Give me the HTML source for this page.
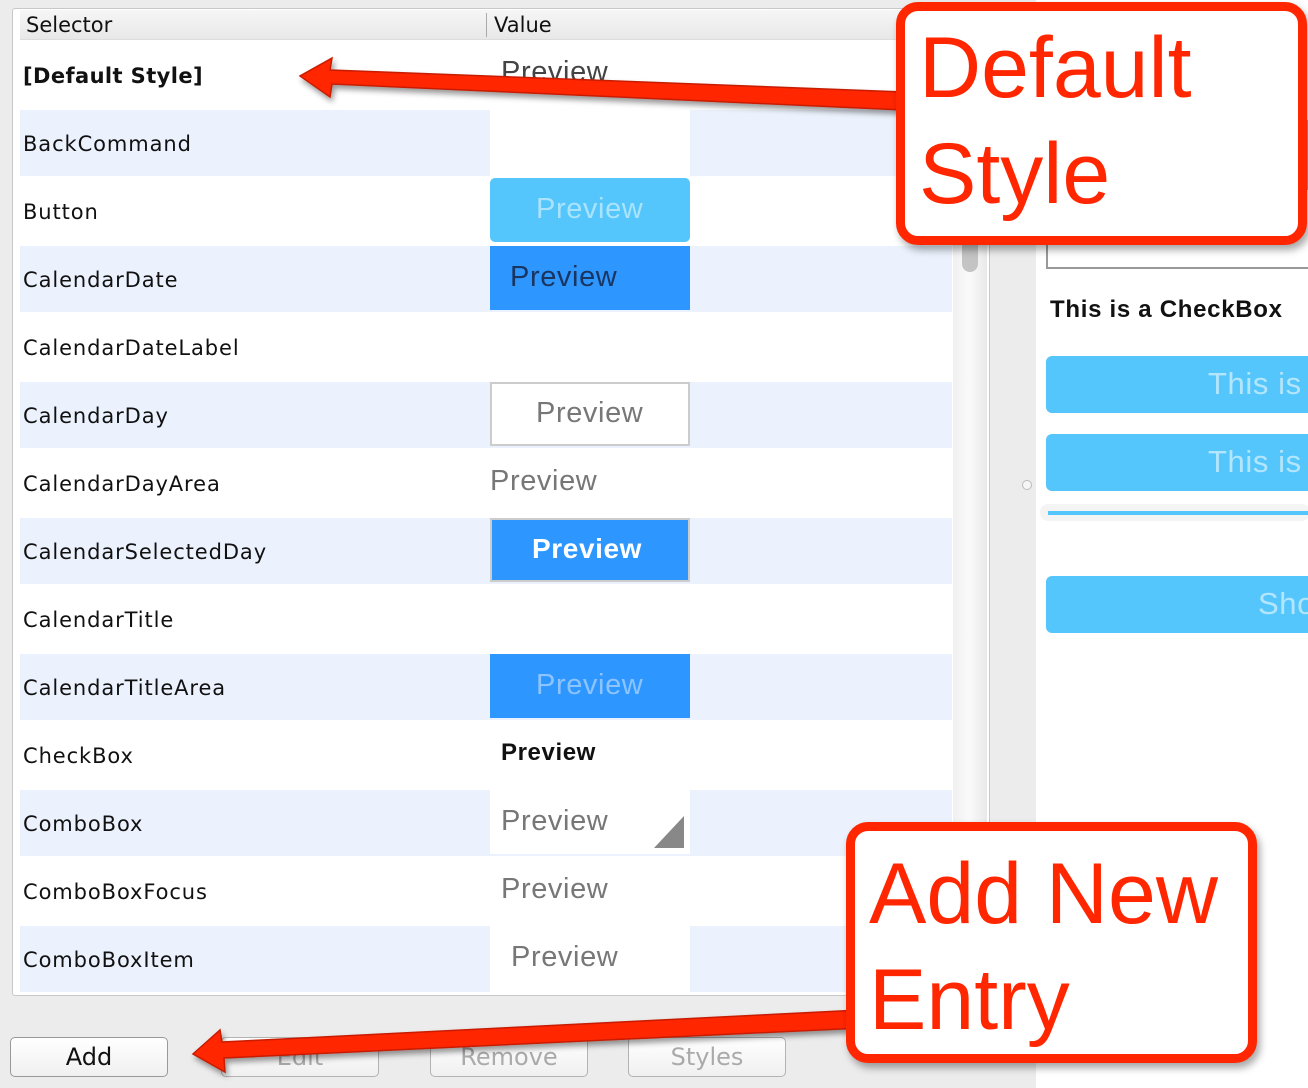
<!DOCTYPE html>
<html><head><meta charset="utf-8"><style>
*{margin:0;padding:0;box-sizing:border-box}
body{width:1308px;height:1088px;background:#ececec;position:relative;overflow:hidden;font-family:"DejaVu Sans","Liberation Sans",sans-serif}
.a{position:absolute}
.row{position:absolute;left:20px;width:932px;height:66px}
.sel{position:absolute;left:3px;top:1px;line-height:66px;font-size:21px;color:#111;letter-spacing:0.9px}
.blue{background:#ecf2fd}
.pv{position:absolute;font-family:"Liberation Sans",sans-serif;font-size:29px;font-weight:300;color:#777;letter-spacing:0.6px}
.btn{position:absolute;height:40px;width:158px;border:1px solid #b3b3b3;border-radius:5px;background:linear-gradient(#fff,#f0f0f0);font-size:24px;text-align:center;line-height:38px;color:#aaa}
.call{position:absolute;border:9px solid #ff2600;border-radius:22px;background:#fff;box-shadow:3px 5px 8px rgba(0,0,0,.35);color:#ff2600;font-family:"Liberation Sans",sans-serif;font-size:86px;line-height:106px;padding-left:14px}
</style></head><body>
<div class="a" style="left:12px;top:8px;width:978px;height:988px;border:1px solid #c8c8c8;background:#fff;border-radius:3px"></div>
<div class="a" style="left:20px;top:10px;width:932px;height:30px;background:linear-gradient(#f6f6f6,#e8e8e8);border-bottom:1px solid #ddd"></div>
<div class="a" style="left:26px;top:10px;line-height:30px;font-size:21px;color:#111">Selector</div>
<div class="a" style="left:486px;top:13px;width:1px;height:24px;background:#aaa"></div>
<div class="a" style="left:494px;top:10px;line-height:30px;font-size:21px;color:#111">Value</div>

<div class="row" style="top:42px"><div class="sel" style="font-weight:bold;letter-spacing:0.4px">[Default Style]</div><div class="pv" style="left:481px;top:14px;color:#444">Preview</div></div>
<div class="row blue" style="top:110px"><div class="sel">BackCommand</div><div class="a" style="left:470px;top:0;width:200px;height:66px;background:#fff"></div></div>
<div class="row" style="top:178px"><div class="sel">Button</div><div class="a" style="left:470px;top:0;width:200px;height:64px;background:#55c6fb;border-radius:5px"></div><div class="pv" style="left:516px;top:15px;color:#a9e3fd">Preview</div></div>
<div class="row blue" style="top:246px"><div class="sel">CalendarDate</div><div class="a" style="left:470px;top:0;width:200px;height:64px;background:#2d96ff"></div><div class="pv" style="left:490px;top:15px;color:#1a3560">Preview</div></div>
<div class="row" style="top:314px"><div class="sel">CalendarDateLabel</div></div>
<div class="row blue" style="top:382px"><div class="sel">CalendarDay</div><div class="a" style="left:470px;top:0;width:200px;height:64px;background:#fff;border:2px solid #ccc"></div><div class="pv" style="left:516px;top:15px">Preview</div></div>
<div class="row" style="top:450px"><div class="sel">CalendarDayArea</div><div class="pv" style="left:470px;top:15px">Preview</div></div>
<div class="row blue" style="top:518px"><div class="sel">CalendarSelectedDay</div><div class="a" style="left:470px;top:0;width:200px;height:64px;background:#2d96ff;border:2px solid #ccc"></div><div class="pv" style="left:512px;top:15px;color:#fff;font-weight:bold;font-size:28px">Preview</div></div>
<div class="row" style="top:586px"><div class="sel">CalendarTitle</div></div>
<div class="row blue" style="top:654px"><div class="sel">CalendarTitleArea</div><div class="a" style="left:470px;top:0;width:200px;height:64px;background:#2d96ff"></div><div class="pv" style="left:516px;top:15px;color:#8cc4ff">Preview</div></div>
<div class="row" style="top:722px"><div class="sel">CheckBox</div><div class="pv" style="left:481px;top:17px;color:#111;font-weight:bold;font-size:24px">Preview</div></div>
<div class="row blue" style="top:790px"><div class="sel">ComboBox</div><div class="a" style="left:470px;top:0;width:200px;height:64px;background:#fff"></div><div class="pv" style="left:481px;top:15px">Preview</div><svg class="a" style="left:634px;top:26px" width="32" height="34"><polygon points="30,0 30,32 0,32" fill="#888"/></svg></div>
<div class="row" style="top:858px"><div class="sel">ComboBoxFocus</div><div class="pv" style="left:481px;top:15px">Preview</div></div>
<div class="row blue" style="top:926px"><div class="sel">ComboBoxItem</div><div class="a" style="left:470px;top:0;width:200px;height:66px;background:#fff"></div><div class="pv" style="left:491px;top:15px">Preview</div></div>

<div class="a" style="left:953px;top:10px;width:34px;height:984px;background:linear-gradient(90deg,#f0f0f0,#fafafa,#e8e8e8)"></div>
<div class="a" style="left:962px;top:40px;width:16px;height:232px;background:#c4c4c4;border-radius:8px"></div>

<div class="a" style="left:990px;top:0;width:46px;height:1088px;background:#ececec"></div>
<div class="a" style="left:1022px;top:480px;width:10px;height:10px;border:1px solid #bbb;border-radius:50%;background:#f6f6f6"></div>
<div class="a" style="left:1036px;top:0;width:272px;height:1088px;background:#fff"></div>
<div class="a" style="left:1290px;top:120px;width:18px;height:70px;background:#55c6fb"></div>
<div class="a" style="left:1046px;top:220px;width:270px;height:49px;border:2px solid #999;border-top:none"></div>
<div class="a" style="left:1050px;top:296px;font-family:'Liberation Sans',sans-serif;font-weight:bold;font-size:24px;letter-spacing:0.7px;color:#111">This is a CheckBox</div>
<div class="a" style="left:1046px;top:356px;width:270px;height:57px;background:#55c6fb;border-radius:6px;overflow:hidden"><div class="pv" style="left:162px;top:10px;color:#b3e6fd;font-size:31px;white-space:nowrap">This is a</div></div>
<div class="a" style="left:1046px;top:434px;width:270px;height:57px;background:#55c6fb;border-radius:6px;overflow:hidden"><div class="pv" style="left:162px;top:10px;color:#b3e6fd;font-size:31px;white-space:nowrap">This is a</div></div>
<div class="a" style="left:1040px;top:504px;width:270px;height:17px;background:#f4f4f4;border-radius:8px"></div>
<div class="a" style="left:1048px;top:511px;width:262px;height:4px;background:#55c6fb"></div>
<div class="a" style="left:1046px;top:576px;width:270px;height:57px;background:#55c6fb;border-radius:6px;overflow:hidden"><div class="pv" style="left:212px;top:10px;color:#b3e6fd;font-size:31px;white-space:nowrap">Show</div></div>

<div class="btn" style="left:10px;top:1037px;color:#111;border-color:#999">Add</div>
<div class="btn" style="left:221px;top:1037px">Edit</div>
<div class="btn" style="left:430px;top:1037px">Remove</div>
<div class="btn" style="left:628px;top:1037px">Styles</div>

<svg class="a" style="left:0;top:0" width="1308" height="1088">
<defs><filter id="sh"><feDropShadow dx="2" dy="4" stdDeviation="3" flood-opacity="0.4"/></filter></defs>
<g fill="#ff2600" stroke="#c81c00" stroke-width="1.5" filter="url(#sh)">
<polygon points="905,92 330,70 332,58 300,76 330,97 332,84 903,110"/>
<polygon points="860,1010 222,1042 220,1030 193,1054 225,1072 224,1058 862,1028"/>
</g></svg>

<div class="call" style="left:896px;top:2px;width:411px;height:243px;padding-top:4px">Default<br>Style</div>
<div class="call" style="left:846px;top:822px;width:411px;height:241px;padding-top:10px;line-height:106px">Add New<br>Entry</div>
</body></html>
